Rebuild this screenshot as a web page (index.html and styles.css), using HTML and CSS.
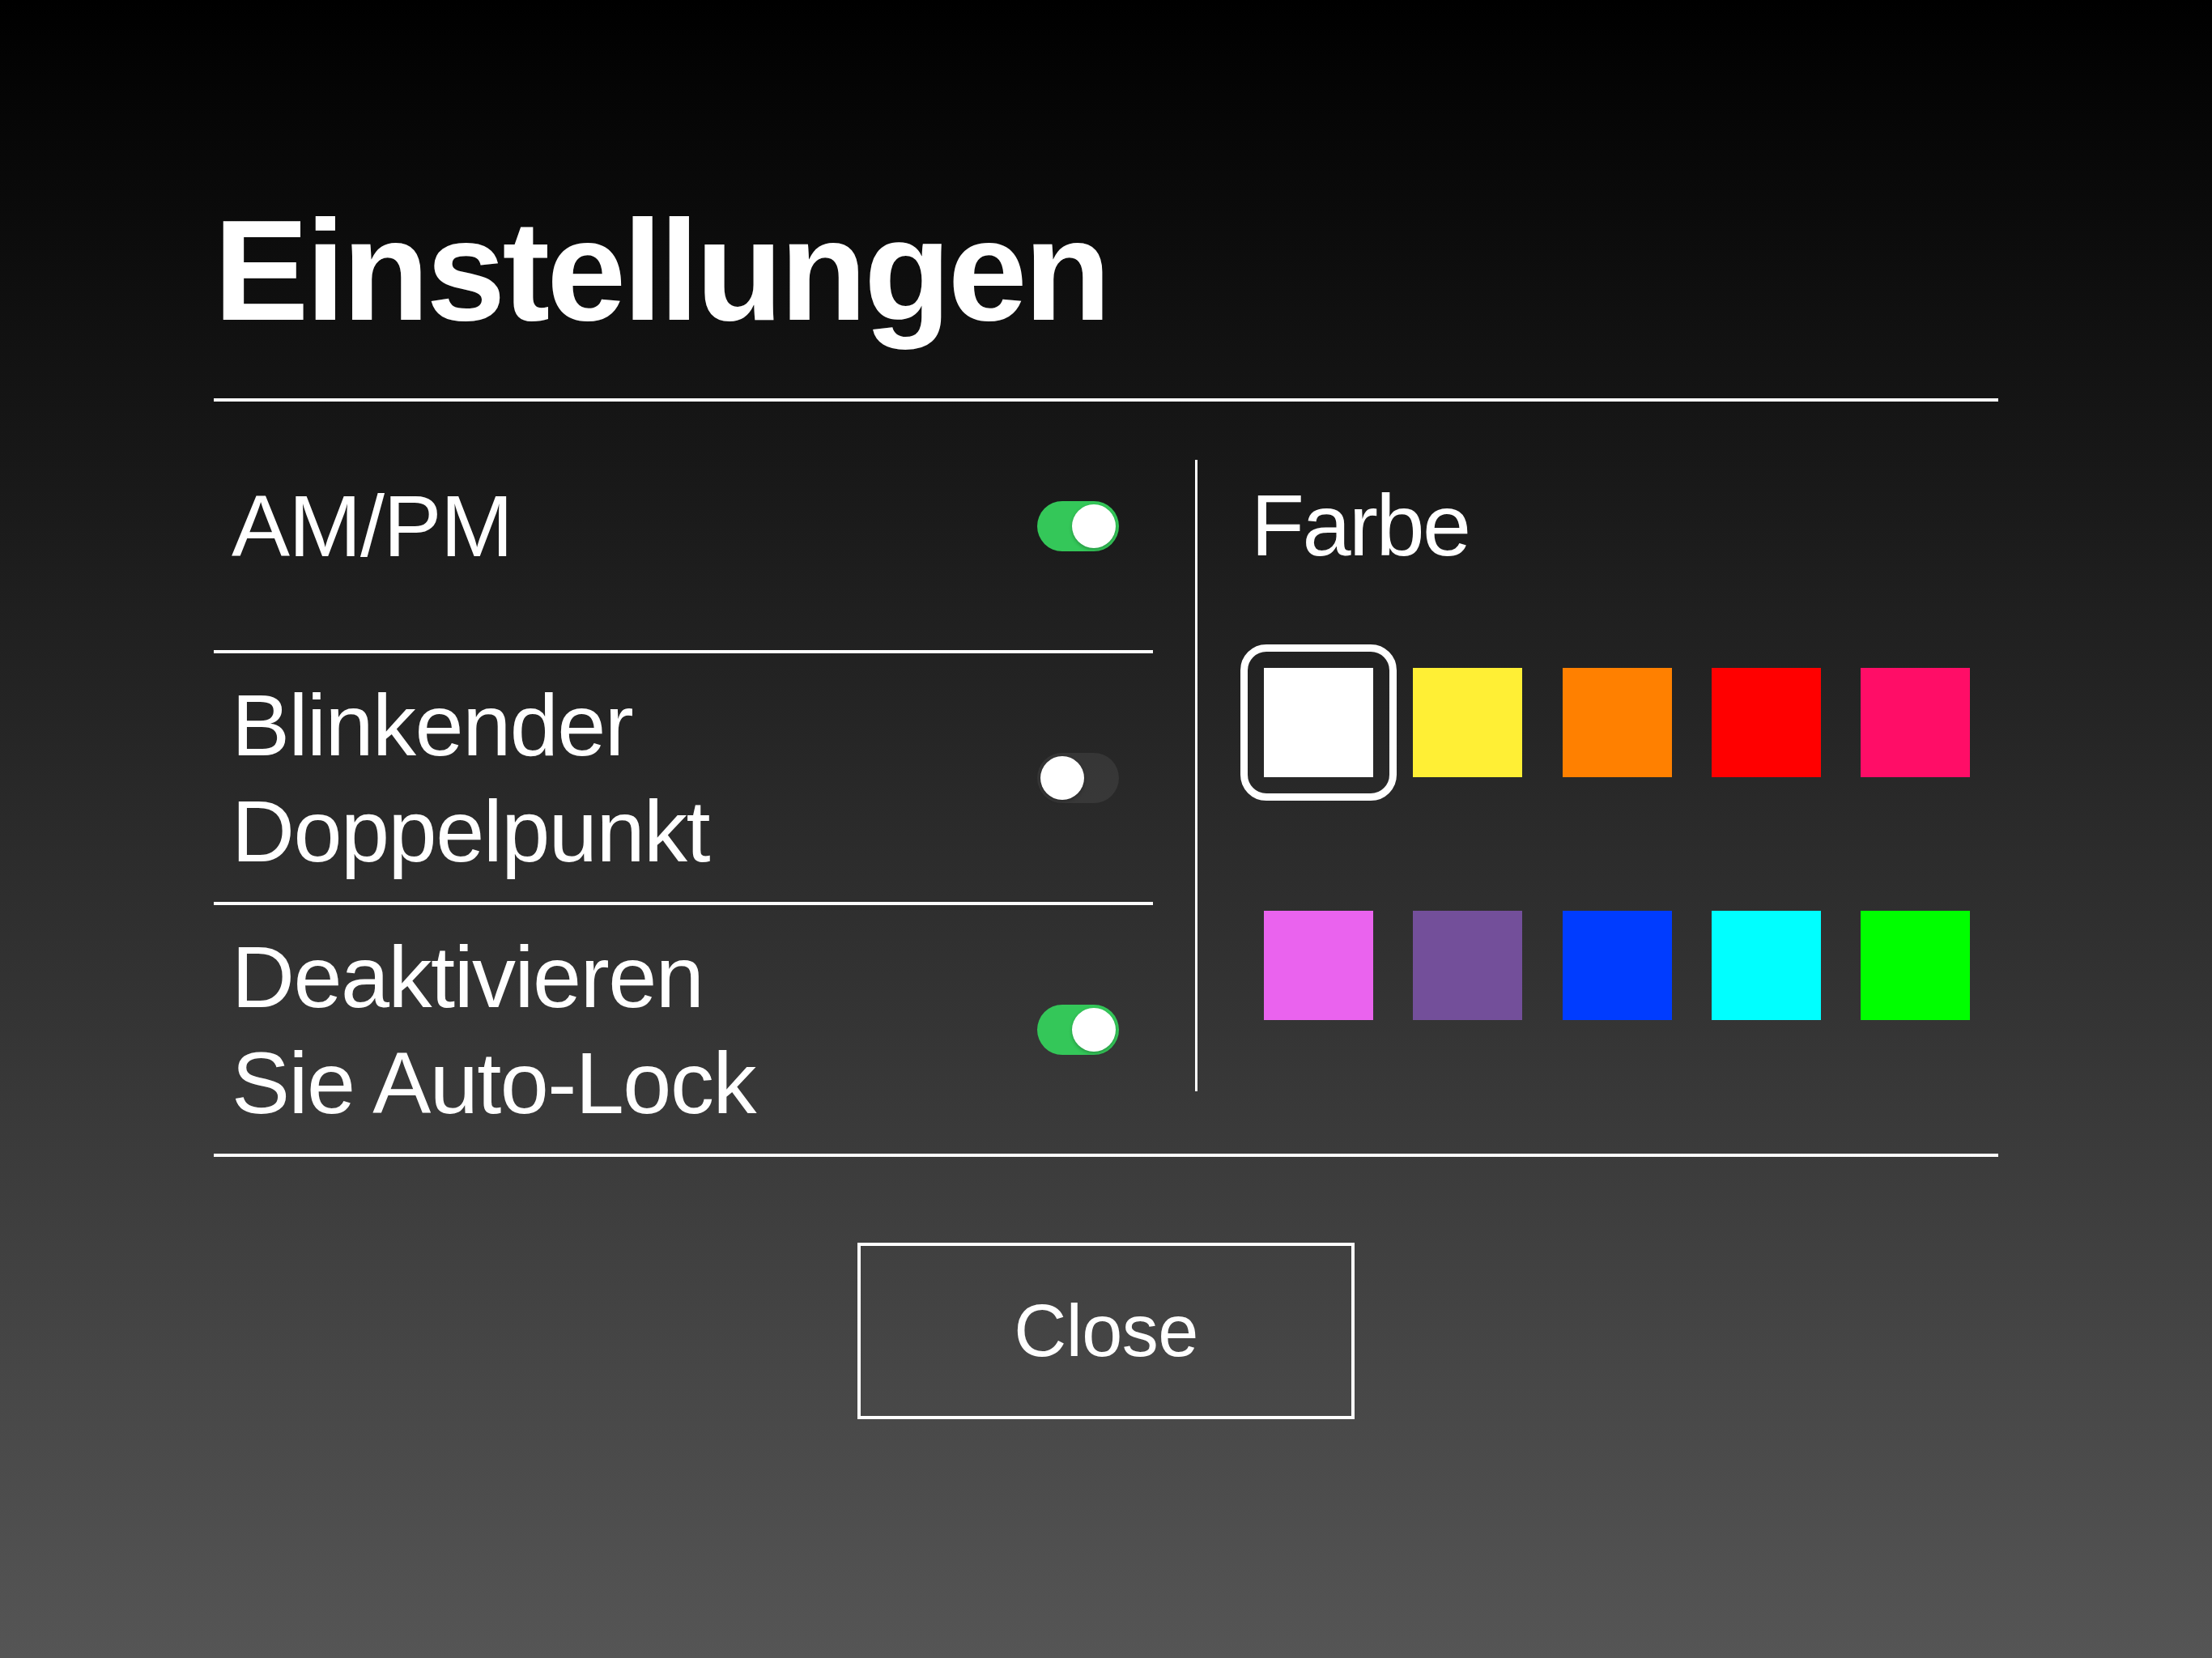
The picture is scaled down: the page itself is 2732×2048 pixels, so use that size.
FILE: index.html
```html
<!DOCTYPE html>
<html lang="de">
<head>
  <meta charset="UTF-8" />
  <meta name="viewport" content="width=device-width, initial-scale=1" />
  <title>Einstellungen</title>
  <link rel="stylesheet" href="styles.css">
</head>
<body>
  <div class="panel">
    <h1 class="title">Einstellungen</h1>

    <div class="options">
      <div class="toggles">
        <div class="row">
          <span class="label">AM/PM</span>
          <span class="switch on"><span class="knob"></span></span>
        </div>
        <div class="row">
          <span class="label">Blinkender<br>Doppelpunkt</span>
          <span class="switch"><span class="knob"></span></span>
        </div>
        <div class="row">
          <span class="label">Deaktivieren<br>Sie Auto-Lock</span>
          <span class="switch on"><span class="knob"></span></span>
        </div>
      </div>

      <div class="divider"></div>

      <div class="colors">
        <div class="color-title">Farbe</div>
        <div class="swatches">
          <div class="swatch white selected"></div>
          <div class="swatch yellow"></div>
          <div class="swatch orange"></div>
          <div class="swatch red"></div>
          <div class="swatch pink"></div>
          <div class="swatch violet"></div>
          <div class="swatch purple"></div>
          <div class="swatch blue"></div>
          <div class="swatch cyan"></div>
          <div class="swatch green"></div>
        </div>
      </div>
    </div>

    <button class="close">Close</button>
  </div>
</body>
</html>
```

FILE: styles.css
```css
body {
  margin: 0;
  min-height: 100vh;
  background: linear-gradient(#000000, #555555);
  color: #ffffff;
  font-family: "Liberation Sans", Arial, sans-serif;
}

.panel {
  width: 2204px;
  margin: 0 auto;
  padding-top: 246px;
}

.title {
  margin: 0;
  font-size: 176px;
  line-height: 1;
  font-weight: 700;
  letter-spacing: -3.8px;
  padding-bottom: 70px;
  border-bottom: 4px solid #ffffff;
}

.options {
  display: flex;
  border-bottom: 4px solid #ffffff;
}

/* left column: label + switch rows */
.toggles {
  width: 1160px;
}

.row {
  height: 307px;
  display: flex;
  align-items: center;
  justify-content: space-between;
  padding: 0 42px 0 22px;
  border-bottom: 4px solid #ffffff;
}

.row:last-child {
  border-bottom: none;
}

.label {
  font-size: 108px;
  line-height: 131px;
  letter-spacing: -1.5px;
}

.switch {
  display: flex;
  width: 101px;
  height: 62px;
  padding: 4px;
  box-sizing: border-box;
  border-radius: 31px;
  background: rgba(255, 255, 255, 0.07);
}

.switch.on {
  background: #34c759;
  justify-content: flex-end;
}

.knob {
  width: 54px;
  height: 54px;
  border-radius: 50%;
  background: #ffffff;
  box-shadow: 0 2px 4px rgba(0, 0, 0, 0.25);
}

.divider {
  width: 3px;
  height: 780px;
  margin: 72px 0 0 52px;
  background: #ffffff;
}

/* right column: colour picker */
.colors {
  flex: 1;
  padding: 87px 0 0 66px;
}

.color-title {
  font-size: 108px;
  line-height: 131px;
  letter-spacing: -2.5px;
}

.swatches {
  display: grid;
  grid-template-columns: repeat(5, 135px);
  column-gap: 49.25px;
  row-gap: 165px;
  margin: 111px 0 0 16px;
}

.swatch {
  position: relative;
  width: 135px;
  height: 135px;
}

.swatch.selected::after {
  content: "";
  position: absolute;
  inset: -29px;
  border: 9px solid #ffffff;
  border-radius: 32px;
}

.white  { background: #ffffff; }
.yellow { background: #ffef35; }
.orange { background: #ff8000; }
.red    { background: #ff0000; }
.pink   { background: #ff0d67; }
.violet { background: #ea63ee; }
.purple { background: #734f9a; }
.blue   { background: #003cff; }
.cyan   { background: #00ffff; }
.green  { background: #00ff00; }

.close {
  display: block;
  width: 614px;
  height: 218px;
  margin: 106px auto 0;
  box-sizing: border-box;
  border: 4px solid #ffffff;
  background: transparent;
  color: #ffffff;
  font-family: "Liberation Sans", Arial, sans-serif;
  font-size: 90px;
  letter-spacing: -0.5px;
  cursor: pointer;
}
```
